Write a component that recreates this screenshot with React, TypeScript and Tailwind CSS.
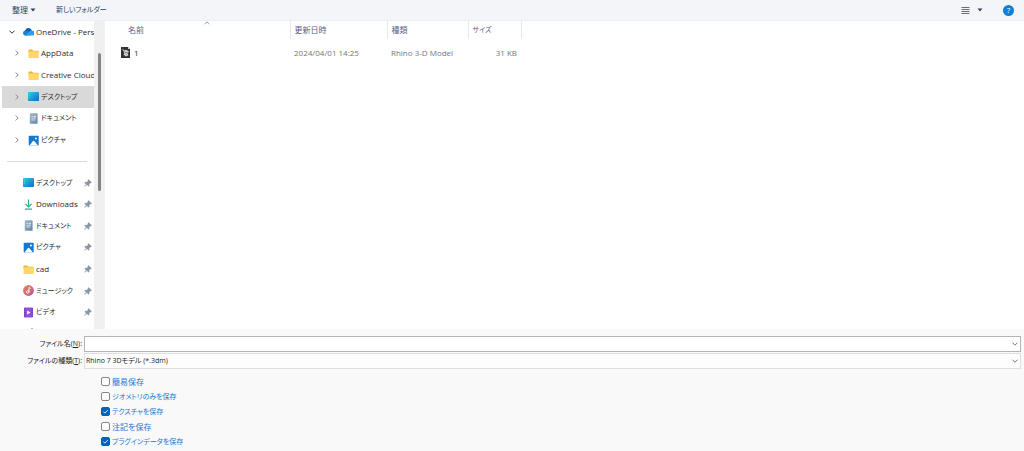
import type { ReactNode } from 'react'

type IconName = 'cloud' | 'folder' | 'desktop' | 'document' | 'picture' | 'download' | 'music' | 'video'

const icons: Record<IconName, ReactNode> = {
  cloud: (
    <>
      <path d="M2.400 9.500a2.500 2.500 0 0 1-.3-4.900A3.500 3.500 0 0 1 8.600 4L9 9z" fill="#0a5fb8" />
      <path d="M2.400 9.500a2.400 2.400 0 0 1-.3-4.700c1-.3 1.700 0 2.500.4L9 8z" fill="#1580d8" />
      <path d="M2.400 9.500 7 4.800A2.700 2.700 0 0 1 9.300 4.700a2.400 2.400 0 0 1-.2 4.800z" fill="#28a0ee" />
    </>
  ),
  folder: (
    <>
      <path d="M.5 2.200q0-.7.7-.7h2.800l1.200 1.200h5q.6 0 .6.600V5H.5z" fill="#efb12e" />
      <rect x=".5" y="3.300" width="10.300" height="6.700" rx=".5" fill="#ffd768" />
    </>
  ),
  desktop: (
    <>
      <rect x="0" y="1" width="11" height="9" rx=".7" fill="url(#desk)" />
      <path d="M1 2.500h.8M1 4.500h.8M1 6.500h.8" stroke="#8fe6f7" strokeWidth=".6" />
    </>
  ),
  document: (
    <>
      <rect x="1.800" y=".3" width="7.800" height="10.400" rx=".7" fill="url(#doc)" />
      <path d="M3.500 3.500h2M3.500 5.300h4M3.500 7h4" stroke="#dbe6f0" strokeWidth=".8" />
      <rect x="6.100" y="2.700" width="1.700" height="1.700" fill="#e5eff7" />
    </>
  ),
  picture: (
    <>
      <rect x=".7" y=".8" width="10" height="9.700" rx=".7" fill="#1278d0" />
      <path d="M1.400 10.500 5 6q.6-.7 1.200 0l3.800 4.500z" fill="#fff" />
      <circle cx="7.900" cy="3.500" r="1" fill="#fff" />
    </>
  ),
  download: (
    <path d="M5.500.5v7M2.400 4.800l3.100 3.100 3.100-3.100M2 10.200h7" fill="none" stroke="#25b591" strokeWidth="1.200" />
  ),
  music: (
    <>
      <circle cx="5.500" cy="5.500" r="5.400" fill="url(#mus)" />
      <circle cx="4.700" cy="7" r="1.300" fill="none" stroke="#fff" strokeWidth=".9" />
      <path d="M6 7V2.500l1.600.9" fill="none" stroke="#fff" strokeWidth=".9" />
    </>
  ),
  video: (
    <>
      <rect x="1" y=".5" width="9" height="10" rx=".8" fill="#9250df" />
      <path d="M1.900 1v9M9.100 1v9" stroke="#5a2aa5" strokeWidth=".9" strokeDasharray="1 1" />
      <path d="M4.200 3.500v4l3.300-2z" fill="#fff" />
    </>
  ),
}

// kana labels are set one size smaller than latin and kanji ones
const tree: { label: string; icon: IconName; kana?: boolean; selected?: boolean }[] = [
  { label: 'AppData', icon: 'folder' },
  { label: 'Creative Cloud', icon: 'folder' },
  { label: 'デスクトップ', icon: 'desktop', kana: true, selected: true },
  { label: 'ドキュメント', icon: 'document', kana: true },
  { label: 'ピクチャ', icon: 'picture', kana: true },
]

const pinned: { label: string; icon: IconName; kana?: boolean }[] = [
  { label: 'デスクトップ', icon: 'desktop', kana: true },
  { label: 'Downloads', icon: 'download' },
  { label: 'ドキュメント', icon: 'document', kana: true },
  { label: 'ピクチャ', icon: 'picture', kana: true },
  { label: 'cad', icon: 'folder' },
  { label: 'ミュージック', icon: 'music', kana: true },
  { label: 'ビデオ', icon: 'video', kana: true },
]

const options = [
  { id: 'simple', label: '簡易保存', kana: false, checked: false },
  { id: 'geometry', label: 'ジオメトリのみを保存', kana: true, checked: false },
  { id: 'texture', label: 'テクスチャを保存', kana: true, checked: true },
  { id: 'notes', label: '注記を保存', kana: false, checked: false },
  { id: 'plugin', label: 'プラグインデータを保存', kana: true, checked: true },
]

function Icon({ name }: { name: IconName }) {
  return (
    <svg viewBox="0 0 11 11" className="h-[11px] w-[11px] shrink-0" aria-hidden="true">
      {icons[name]}
    </svg>
  )
}

function Gradients() {
  return (
    <svg className="absolute h-0 w-0" aria-hidden="true">
      <defs>
        <linearGradient id="desk" x1="0" y1="0" x2="1" y2="1">
          <stop offset="0" stopColor="#35c8e4" />
          <stop offset="1" stopColor="#0871bf" />
        </linearGradient>
        <linearGradient id="doc" x1="0" y1="0" x2="1" y2="1">
          <stop offset="0" stopColor="#a5b9cd" />
          <stop offset="1" stopColor="#6383a5" />
        </linearGradient>
        <linearGradient id="mus" x1="0" y1="0" x2="1" y2="1">
          <stop offset="0" stopColor="#ef8550" />
          <stop offset="1" stopColor="#b5579b" />
        </linearGradient>
      </defs>
    </svg>
  )
}

function Chevron({ className }: { className: string }) {
  return (
    <svg viewBox="0 0 8 8" className={`h-2 w-2 shrink-0 ${className}`} fill="none" stroke="currentColor" aria-hidden="true">
      <path d="M1.500 2.700 4 5.200l2.500-2.500" />
    </svg>
  )
}

function Caret() {
  return (
    <svg viewBox="0 0 6 4" className="h-1 w-[6px]" aria-hidden="true">
      <path d="M.5.5h5L3 3.500z" fill="#2f4260" />
    </svg>
  )
}

function Pin() {
  return (
    <svg viewBox="0 0 8 8" className="ml-auto mr-[2px] h-2 w-2 shrink-0" aria-hidden="true">
      <path d="M4.600.5 7.500 3.300 6.800 4l-.5-.1-1.200 1.300.1 1.500-.7.6-1.700-1.700L.7 7.400l-.2-.2 1.700-1.900L.7 3.700l.6-.6 1.500.1L4.100 2 3.900 1.200z" fill="#8a96a2" stroke="#8a96a2" strokeWidth=".4" />
    </svg>
  )
}

function Toolbar() {
  return (
    <header className="flex h-[21px] items-center border-b border-[#eceef0] bg-[#f3f5f8] pl-3 pr-[10px] text-[#2f4260]">
      <button className="flex items-center gap-[2px]">整理 <Caret /></button>
      <button className="ml-5 text-[7px]">新しいフォルダー</button>
      <button className="ml-auto flex items-center gap-[7px]" aria-label="表示">
        <svg viewBox="0 0 9 9" className="h-[9px] w-[9px]" stroke="#6b6b6b" aria-hidden="true">
          <path d="M.5 1.500h8M.5 3.500h8M.5 5.500h8M.5 7.500h8" />
        </svg>
        <Caret />
      </button>
      <button className="ml-5 flex h-[11px] w-[11px] items-center justify-center rounded-full bg-[#0f80d7] text-[8px] text-white" aria-label="ヘルプ">?</button>
    </header>
  )
}

function Sidebar() {
  return (
    <nav className="flex w-[105px] shrink-0 text-[#2b2b2b]">
      <div className="w-[94px] overflow-hidden whitespace-nowrap">
        <ul className="grid h-[130px] grid-rows-6">
          <li className="flex items-center pl-2">
            <Chevron className="text-[#333]" />
            <a href="#" className="ml-[7px] flex items-center gap-[2px]"><Icon name="cloud" />OneDrive - Personal</a>
          </li>
          {tree.map((item) => (
            <li key={item.label} className={item.selected ? 'ml-[2px] flex items-center bg-[#d9d9d9] pl-[11px]' : 'flex items-center pl-[13px]'}>
              <Chevron className="-rotate-90 text-[#888]" />
              <a href="#" className={`ml-[7px] flex items-center gap-[2px] ${item.kana ? 'text-[7px]' : ''}`}><Icon name={item.icon} />{item.label}</a>
            </li>
          ))}
        </ul>
        <hr className="mx-[7px] my-[10px] border-[#dcdcdc]" />
        <ul className="grid h-[151px] grid-rows-7">
          {pinned.map((item) => (
            <li key={item.label} className="flex items-center pl-[23px]">
              <a href="#" className={`flex items-center gap-[2px] ${item.kana ? 'text-[7px]' : ''}`}><Icon name={item.icon} />{item.label}</a>
              <Pin />
            </li>
          ))}
        </ul>
        {/* top edge of the next row, cut by the panel */}
        <div className="ml-[31px] mt-[5px] h-px w-[2px] bg-[#7cc4ea]" />
      </div>
      <div className="w-[11px] bg-[#f0f0f0] pt-8">
        <div className="mx-auto h-[138px] w-[3px] rounded-full bg-[#858585]" />
      </div>
    </nav>
  )
}

function FileList() {
  return (
    <main className="min-w-0 flex-1">
      <table className="w-full table-fixed text-left">
        <thead className="text-[#4f6585]">
          <tr className="h-[18px]">
            <th className="relative w-[185px] border-r border-[#e8e8e8] pl-[23px] font-normal">
              名前
              <svg viewBox="0 0 6 4" className="absolute left-[99px] top-0 h-1 w-[6px]" fill="none" stroke="#888" strokeWidth=".8" aria-hidden="true">
                <path d="M.5 3.300 3 .8l2.500 2.500" />
              </svg>
            </th>
            <th className="w-[97px] border-r border-[#e8e8e8] pl-1 font-normal">更新日時</th>
            <th className="w-[81px] border-r border-[#e8e8e8] pl-1 font-normal">種類</th>
            <th className="w-[53px] border-r border-[#e8e8e8] pl-1 text-[7px] font-normal">サイズ</th>
            <th />
          </tr>
        </thead>
        <tbody className="text-[#757575]">
          <tr className="h-[27px]">
            <td className="pl-4 text-[#2b2b2b]">
              <span className="flex items-center gap-1">
                <svg viewBox="0 0 9 11" className="h-[11px] w-[9px]" aria-hidden="true">
                  <path d="M0 0h7l2 2v9H0z" fill="#333" />
                  <path d="M7 0v2h2z" fill="#ddd" />
                  <path d="M1 1.500 3.500 3.500l1.500-.8L8 4.500 6.500 6.500l1 1.700-2.500 1.300L2.500 7.500l1-1.500z" fill="#d8d8d8" />
                  <path d="m3.500 4.500 1.500 1.200 1.800-.4M4.600 7l1.200.6" stroke="#444" strokeWidth=".6" fill="none" />
                </svg>
                1
              </span>
            </td>
            <td className="pl-1">2024/04/01 14:25</td>
            <td className="pl-1">Rhino 3-D Model</td>
            <td className="pr-1 text-right">31 KB</td>
            <td />
          </tr>
        </tbody>
      </table>
    </main>
  )
}

function SaveForm() {
  return (
    <form className="flex-1 bg-[#f9f9f9] pb-1 pt-[7px] text-[#222]">
      <div className="grid grid-cols-[82px_1fr] items-center gap-x-[2px] gap-y-px pr-[3px] text-[7px]">
        <label htmlFor="filename" className="text-right">ファイル名(<u>N</u>):</label>
        <div className="flex h-4 items-center border border-[#b5b5b5] bg-white pr-[1px]">
          <input id="filename" type="text" className="min-w-0 flex-1 px-[2px] outline-none" />
          <Chevron className="text-[#777]" />
        </div>
        <label htmlFor="filetype" className="text-right">ファイルの種類(<u>T</u>):</label>
        <div className="relative flex h-4 items-center border border-[#dedede] bg-[#fdfdfd]">
          <select id="filetype" className="w-full appearance-none px-[1px] outline-none">
            <option>Rhino 7 3Dモデル (*.3dm)</option>
          </select>
          <Chevron className="pointer-events-none absolute right-[1px] text-[#777]" />
        </div>
      </div>
      <div className="mt-[5px] pl-[101px]">
        {options.map((option) => (
          <div key={option.id} className="flex h-[15px] items-center gap-[2px]">
            <span className="relative flex">
              <input
                id={option.id}
                type="checkbox"
                defaultChecked={option.checked}
                className="peer h-[9px] w-[9px] appearance-none rounded-xs border border-[#858585] bg-white checked:border-[#0062b8] checked:bg-[#0062b8]"
              />
              <svg viewBox="0 0 9 9" className="pointer-events-none absolute inset-0 hidden peer-checked:block" fill="none" stroke="#fff" strokeWidth=".9" aria-hidden="true">
                <path d="m2.300 4.600 1.500 1.500 3-3" />
              </svg>
            </span>
            <label htmlFor={option.id} className={option.kana ? 'text-[7px] text-[#2378d0]' : 'text-[#2378d0]'}>{option.label}</label>
          </div>
        ))}
      </div>
    </form>
  )
}

export default function App() {
  return (
    <div lang="ja" className="flex min-h-screen flex-col bg-white font-['Open_Sans','Noto_Sans_CJK_JP',sans-serif] text-[8px] leading-3 [font-feature-settings:'palt']">
      <Gradients />
      <Toolbar />
      <div className="flex h-[308px] overflow-hidden">
        <Sidebar />
        <FileList />
      </div>
      <SaveForm />
    </div>
  )
}
